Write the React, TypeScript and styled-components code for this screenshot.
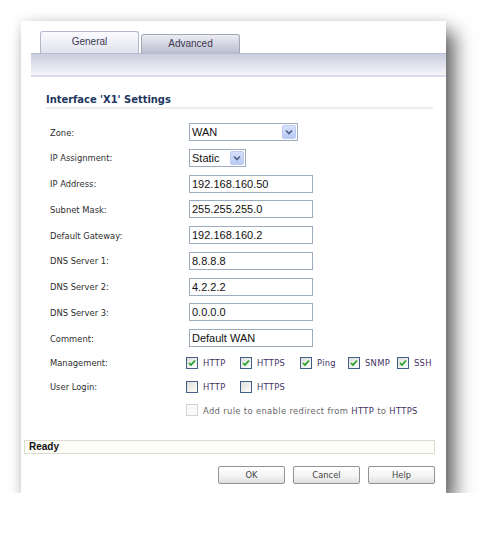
import React from 'react';
import styled, { createGlobalStyle } from 'styled-components';

const GlobalStyle = createGlobalStyle`
    html, body {
        margin: 0;
        background: #fff;
    }
    body {
        font-family: "DejaVu Sans Condensed", "DejaVu Sans", sans-serif;
    }
`

type Field = { label: string, value?: string, select?: number }

const fields: Field[] = [
    { label: 'Zone:', value: 'WAN', select: 109 },
    { label: 'IP Assignment:', value: 'Static', select: 57 },
    { label: 'IP Address:', value: '192.168.160.50' },
    { label: 'Subnet Mask:', value: '255.255.255.0' },
    { label: 'Default Gateway:', value: '192.168.160.2' },
    { label: 'DNS Server 1:', value: '8.8.8.8' },
    { label: 'DNS Server 2:', value: '4.2.2.2' },
    { label: 'DNS Server 3:', value: '0.0.0.0' },
    { label: 'Comment:', value: 'Default WAN' },
]

const management = ['HTTP', 'HTTPS', 'Ping', 'SNMP', 'SSH']
const userLogin = ['HTTP', 'HTTPS']

const Chevron = () => (
    <svg width="8" height="6" viewBox="0 0 8 6">
        <path d="M1 1.5 L4 4.5 L7 1.5" fill="none" stroke="#4d6185" strokeWidth="1.6" />
    </svg>
)

const Check = ({ checked, disabled }: { checked?: boolean, disabled?: boolean }) => (
    <Box $disabled={disabled}>
        {checked &&
            <svg width="8" height="8" viewBox="0 0 8 8">
                <path d="M1 4 L3 6 L7 1.5" fill="none" stroke="#21a121" strokeWidth="1.7" />
            </svg>}
    </Box>
)

const App = () => {
    return <>
        <GlobalStyle />
        <Window>
            <TabStrip>
                <Tab $active>General</Tab>
                <Tab>Advanced</Tab>
            </TabStrip>
            <Band />
            <Title>Interface 'X1' Settings</Title>
            <Form>
                {fields.map(f => (
                    <Row key={f.label} $h={18}>
                        <Label>{f.label}</Label>
                        {f.select ?
                            <Select $w={f.select}>
                                <span>{f.value}</span>
                                <Arrow><Chevron /></Arrow>
                            </Select> :
                            <TextBox>{f.value}</TextBox>}
                    </Row>
                ))}
                <Row $h={14} $mt={1}>
                    <Label>Management:</Label>
                    <Checks>
                        {management.map(m => (
                            <CheckItem key={m}><Check checked /><CheckText>{m}</CheckText></CheckItem>
                        ))}
                    </Checks>
                </Row>
                <Row $h={14} $mt={2}>
                    <Label>User Login:</Label>
                    <Checks>
                        {userLogin.map(m => (
                            <CheckItem key={m}><Check /><CheckText>{m}</CheckText></CheckItem>
                        ))}
                    </Checks>
                </Row>
                <Row $h={14} $mt={2}>
                    <span />
                    <CheckItem $offset>
                        <Check disabled />
                        <DisabledText>Add rule to enable redirect from <b>HTTP</b> to <b>HTTPS</b></DisabledText>
                    </CheckItem>
                </Row>
            </Form>
            <Status>Ready</Status>
            <Actions>
                <Button>OK</Button>
                <Button>Cancel</Button>
                <Button>Help</Button>
            </Actions>
        </Window>
    </>
}

export default App

const Window = styled.div`
    width: 425px;
    margin: 21px 0 0 21px;
    padding-bottom: 9px;
    background: #fff;
    box-shadow: 0 0 10px rgba(0, 0, 0, 0.1), 9px 11px 18px rgba(0, 0, 0, 0.6);
`
const TabStrip = styled.div`
    display: flex;
    align-items: flex-end;
    gap: 2px;
    height: 22px;
    padding: 10px 0 0 19px;
`
const Tab = styled.div<{ $active?: boolean }>`
    box-sizing: border-box;
    width: 99px;
    height: ${p => p.$active ? 22 : 19}px;
    border: 1px solid ${p => p.$active ? '#b4b7c8' : '#a4a7ba'};
    border-bottom: none;
    border-radius: 3px 3px 0 0;
    background: ${p => p.$active
        ? 'linear-gradient(#fbfbfe, #e1e3ee)'
        : 'linear-gradient(#ececf2, #bbbed1)'};
    font: 10px "Liberation Sans", Arial, sans-serif;
    color: #3a3a50;
    text-align: center;
    line-height: ${p => p.$active ? 20 : 17}px;
`
const Band = styled.div`
    height: 21px;
    margin-left: 10px;
    border-top: 1px solid #b9bccf;
    border-bottom: 2px solid #d9dbe8;
    background: linear-gradient(#cacde0, #f5f5fa);
`
const Title = styled.div`
    margin: 16px 13px 0 25px;
    border-bottom: 2px solid #ededed;
    font-size: 11px;
    font-weight: bold;
    line-height: 14px;
    color: #1c3660;
`
const Form = styled.div`
    display: flex;
    flex-direction: column;
    gap: 7.75px;
    padding: 14px 0 0 29px;
`
const Row = styled.div<{ $h: number, $mt?: number }>`
    display: grid;
    grid-template-columns: 139px auto;
    align-items: center;
    height: ${p => p.$h}px;
    margin-top: ${p => p.$mt ?? 0}px;
`
const Label = styled.span`
    font-size: 9.3px;
    color: #2e2e2e;
`
const TextBox = styled.div`
    box-sizing: border-box;
    width: 124px;
    height: 18px;
    padding: 0 2px;
    border: 1px solid #9dabbf;
    font: 11px "Liberation Sans", Arial, sans-serif;
    line-height: 16px;
    color: #111;
`
const Select = styled.div<{ $w: number }>`
    box-sizing: border-box;
    display: flex;
    align-items: center;
    justify-content: space-between;
    width: ${p => p.$w}px;
    height: 18px;
    padding: 1px 1px 1px 2px;
    border: 1px solid #9dabbf;
    font: 11px "Liberation Sans", Arial, sans-serif;
    color: #111;
`
const Arrow = styled.span`
    box-sizing: border-box;
    display: flex;
    align-items: center;
    justify-content: center;
    width: 14px;
    height: 14px;
    border: 1px solid #bccbef;
    border-radius: 2px;
    background: linear-gradient(#d6e0fa, #b9cbf6);
`
const Checks = styled.div`
    display: grid;
    grid-template-columns: 54px 60px 48px 49px auto;
    margin-left: -3px;
`
const CheckItem = styled.div<{ $offset?: boolean }>`
    display: flex;
    align-items: center;
    gap: 5px;
    white-space: nowrap;
    margin-left: ${p => p.$offset ? -3 : 0}px;
`
const Box = styled.span<{ $disabled?: boolean }>`
    box-sizing: border-box;
    flex-shrink: 0;
    display: flex;
    align-items: center;
    justify-content: center;
    width: 12px;
    height: 12px;
    border: 1px solid ${p => p.$disabled ? '#d4d4d4' : '#3f5f86'};
    background: ${p => p.$disabled ? '#fafafa' : 'linear-gradient(135deg, #dcdcd8, #ffffff)'};
`
const CheckText = styled.span`
    font-size: 9.3px;
    color: #45305f;
    letter-spacing: 0.3px;
`
const DisabledText = styled.span`
    font-size: 9.3px;
    color: #666;
    letter-spacing: 0.35px;
    b {
        font-weight: normal;
        color: #45305f;
    }
`
const Status = styled.div`
    box-sizing: border-box;
    height: 14px;
    margin: 23px 11px 0 3px;
    padding-left: 4px;
    border: 1px solid #dcdccc;
    background: #fdfdf8;
    font: bold 10px "Liberation Sans", Arial, sans-serif;
    line-height: 12px;
    color: #111;
`
const Actions = styled.div`
    display: flex;
    justify-content: flex-end;
    gap: 8px;
    margin: 12px 11px 0 0;
`
const Button = styled.div`
    box-sizing: border-box;
    width: 67px;
    height: 18px;
    border: 1px solid #939393;
    border-radius: 2px;
    background: linear-gradient(#ffffff, #f2f2f2 60%, #dedede);
    font-size: 9.3px;
    line-height: 16px;
    text-align: center;
    color: #444;
`
